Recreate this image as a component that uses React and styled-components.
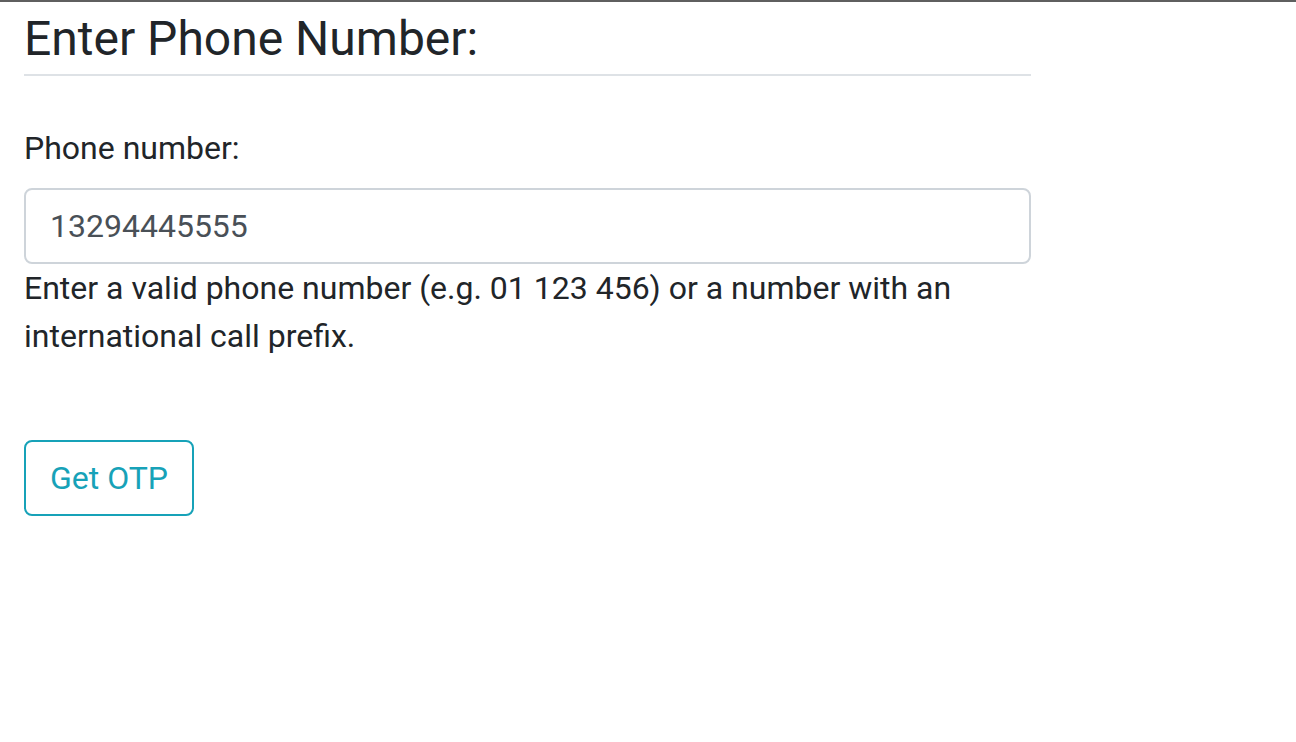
import React, { useState } from "react";
import styled, { createGlobalStyle } from "styled-components";

const GlobalStyle = createGlobalStyle`
  html, body {
    margin: 0;
    padding: 0;
    background: #fff;
  }
  body {
    font-family: Roboto, "Liberation Sans", Arial, sans-serif;
    font-size: 32px;
    line-height: 1.5;
    color: #212529;
  }
  * {
    box-sizing: border-box;
  }
`;

const Page = styled.div`
  border-top: 2px solid #5f5f5f;
  min-height: 742px;
`;

const Container = styled.div`
  width: 1007px;
  margin-left: 24px;
  padding-top: 8px;
`;

const Title = styled.h2`
  margin: 0;
  padding-bottom: 6px;
  font-size: 48px;
  font-weight: 400;
  line-height: 1.2;
  border-bottom: 2px solid #dee2e6;
`;

const Form = styled.form`
  display: flex;
  flex-direction: column;
  padding-top: 48px;
`;

const Label = styled.label`
  margin-bottom: 16px;
`;

const Input = styled.input`
  display: block;
  width: 100%;
  height: 76px;
  padding: 12px 24px;
  font-family: inherit;
  font-size: 32px;
  line-height: 1.5;
  color: #495057;
  background: #fff;
  border: 2px solid #ced4da;
  border-radius: 8px;
  outline: none;
`;

const HelpText = styled.div`
  margin-bottom: 80px;
`;

const Button = styled.button`
  align-self: flex-start;
  height: 76px;
  padding: 12px 24px;
  font-family: inherit;
  font-size: 32px;
  line-height: 1.5;
  color: #17a2b8;
  background: transparent;
  border: 2px solid #17a2b8;
  border-radius: 8px;
  cursor: pointer;
`;

export default function App() {
  const [phone, setPhone] = useState("13294445555");

  return (
    <Page>
      <GlobalStyle />
      <Container>
        <Title>Enter Phone Number:</Title>
        <Form onSubmit={(e) => e.preventDefault()}>
          <Label htmlFor="phone">Phone number:</Label>
          <Input
            id="phone"
            type="text"
            value={phone}
            onChange={(e) => setPhone(e.target.value)}
          />
          <HelpText>
            Enter a valid phone number (e.g. 01 123 456) or a number with an
            international call prefix.
          </HelpText>
          <Button type="submit">Get OTP</Button>
        </Form>
      </Container>
    </Page>
  );
}
